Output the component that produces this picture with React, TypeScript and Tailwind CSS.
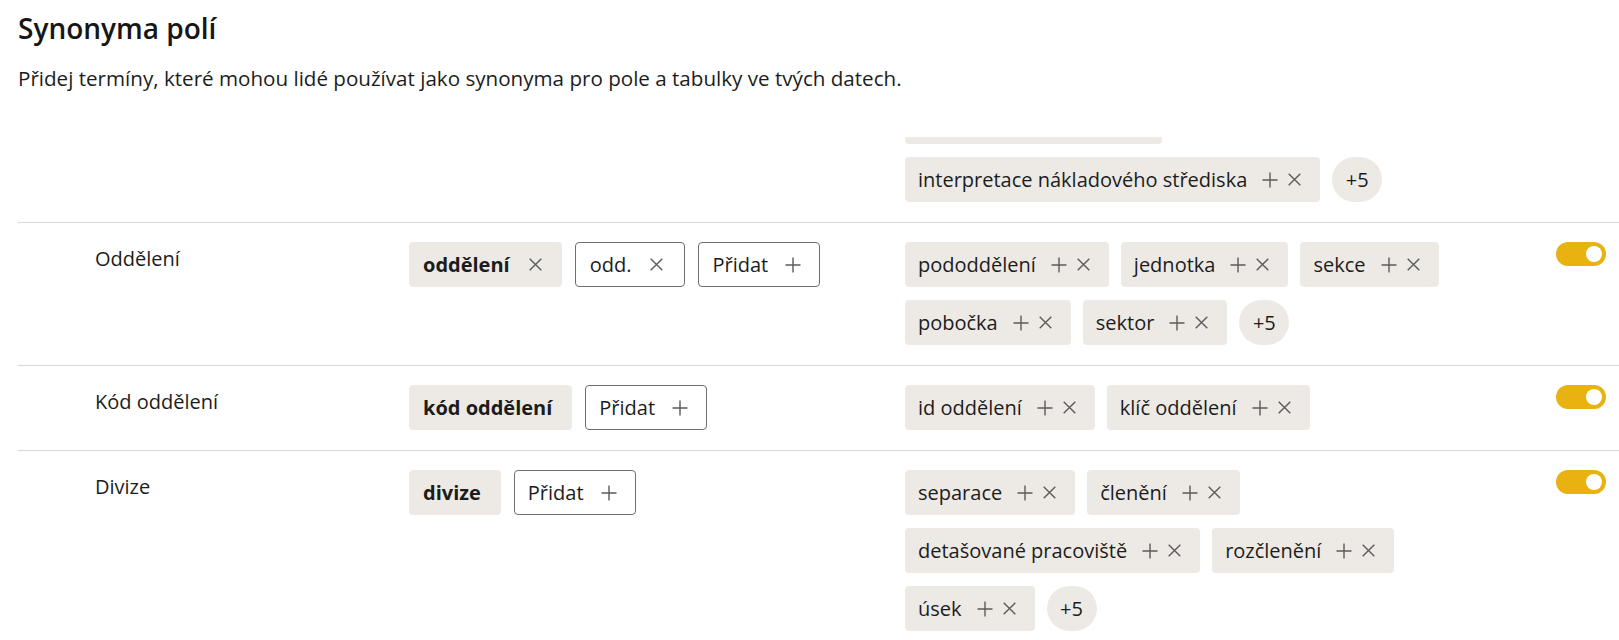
import React from "react";

type FieldRow = {
  label: string;
  variants: { text: string; primary?: boolean; removable?: boolean }[];
  synonyms: string[];
  more?: number;
};

const PlusIcon = () => (
  <svg width="16" height="16" viewBox="0 0 16 16" className="shrink-0" aria-hidden>
    <path d="M8 0.5V15.5M0.5 8H15.5" stroke="#5b5b5b" strokeWidth="1.4" fill="none" />
  </svg>
);

const CloseIcon = () => (
  <svg width="13" height="13" viewBox="0 0 13 13" className="shrink-0" aria-hidden>
    <path d="M0.7 0.7L12.3 12.3M12.3 0.7L0.7 12.3" stroke="#5b5b5b" strokeWidth="1.4" fill="none" />
  </svg>
);

const SynonymChip = ({ text }: { text: string }) => (
  <div className="h-[45px] rounded-[4px] bg-[#edeae6] flex items-center pl-[13px] pr-[19px] whitespace-nowrap">
    <span>{text}</span>
    <span className="ml-[15px] flex items-center">
      <PlusIcon />
    </span>
    <span className="ml-[10px] flex items-center">
      <CloseIcon />
    </span>
  </div>
);

const MoreBadge = ({ count }: { count: number }) => (
  <div className="h-[45px] w-[50px] rounded-full bg-[#edeae6] flex items-center justify-center">
    +{count}
  </div>
);

const VariantChip = ({
  text,
  primary,
  removable,
}: {
  text: string;
  primary?: boolean;
  removable?: boolean;
}) =>
  primary ? (
    <div className="h-[45px] rounded-[4px] bg-[#edeae6] flex items-center pl-[14px] pr-[20px] font-bold whitespace-nowrap">
      <span>{text}</span>
      {removable && (
        <span className="ml-[19px] flex items-center">
          <CloseIcon />
        </span>
      )}
    </div>
  ) : (
    <div className="h-[45px] rounded-[4px] border border-[#6f6f6f] bg-white flex items-center pl-[14px] pr-[21px] whitespace-nowrap">
      <span>{text}</span>
      <span className="ml-[19px] flex items-center">
        <CloseIcon />
      </span>
    </div>
  );

const AddButton = () => (
  <div className="h-[45px] rounded-[4px] border border-[#6f6f6f] bg-white flex items-center pl-[13px] pr-[18px] whitespace-nowrap">
    <span>Přidat</span>
    <span className="ml-[17px] flex items-center">
      <PlusIcon />
    </span>
  </div>
);

const Toggle = () => (
  <div className="w-[50px] h-[24px] rounded-full bg-[#e8b210] flex items-center justify-end pr-[4px]">
    <div className="w-[16px] h-[16px] rounded-full bg-white" />
  </div>
);

const rows: FieldRow[] = [
  {
    label: "Oddělení",
    variants: [
      { text: "oddělení", primary: true, removable: true },
      { text: "odd." },
    ],
    synonyms: ["pododdělení", "jednotka", "sekce", "pobočka", "sektor"],
    more: 5,
  },
  {
    label: "Kód oddělení",
    variants: [{ text: "kód oddělení", primary: true }],
    synonyms: ["id oddělení", "klíč oddělení"],
  },
  {
    label: "Divize",
    variants: [{ text: "divize", primary: true }],
    synonyms: [
      "separace",
      "členění",
      "detašované pracoviště",
      "rozčlenění",
      "úsek",
    ],
    more: 5,
  },
];

// Tail of the previous field, partly scrolled out of view above the list.
const PartialRow = () => (
  <div className="grid grid-cols-[391px_496px_585px_1fr] border-b border-[#d9d9d9] pb-[20px]">
    <div />
    <div />
    <div className="flex flex-wrap content-start gap-x-[12px] gap-y-[13px]">
      <div className="h-[45px] w-[257px] rounded-[4px] bg-[#edeae6]" />
      <SynonymChip text="interpretace nákladového střediska" />
      <MoreBadge count={5} />
    </div>
    <div />
  </div>
);

const Row = ({ row }: { row: FieldRow }) => (
  <div className="grid grid-cols-[391px_496px_585px_1fr] border-b border-[#d9d9d9] pt-[19px] pb-[20px]">
    <div className="pl-[77px] pt-[3px] leading-[28px]">{row.label}</div>
    <div className="flex flex-wrap content-start gap-x-[13px] gap-y-[13px]">
      {row.variants.map((v) => (
        <VariantChip key={v.text} {...v} />
      ))}
      <AddButton />
    </div>
    <div className="flex flex-wrap content-start gap-x-[12px] gap-y-[13px]">
      {row.synonyms.map((s) => (
        <SynonymChip key={s} text={s} />
      ))}
      {row.more ? <MoreBadge count={row.more} /> : null}
    </div>
    <div className="flex justify-end items-start pr-[13px]">
      <Toggle />
    </div>
  </div>
);

export default function App() {
  return (
    <div className="w-[1619px] h-[640px] overflow-hidden bg-white text-[#1c1c1c] font-['Open_Sans','Noto_Sans',sans-serif] text-[20px]">
      <header className="h-[137px] pl-[18px] pt-[10px]">
        <h1 className="text-[28px] leading-[36px] font-semibold text-[#161616]">
          Synonyma polí
        </h1>
        <p className="mt-[18px] text-[20.6px] leading-[28px] text-[#1c1c1c]">
          Přidej termíny, které mohou lidé používat jako synonyma pro pole a tabulky ve tvých datech.
        </p>
      </header>
      <div className="h-[503px] overflow-hidden pl-[18px]">
        <div className="-mt-[38px]">
          <PartialRow />
          {rows.map((r) => (
            <Row key={r.label} row={r} />
          ))}
        </div>
      </div>
    </div>
  );
}
